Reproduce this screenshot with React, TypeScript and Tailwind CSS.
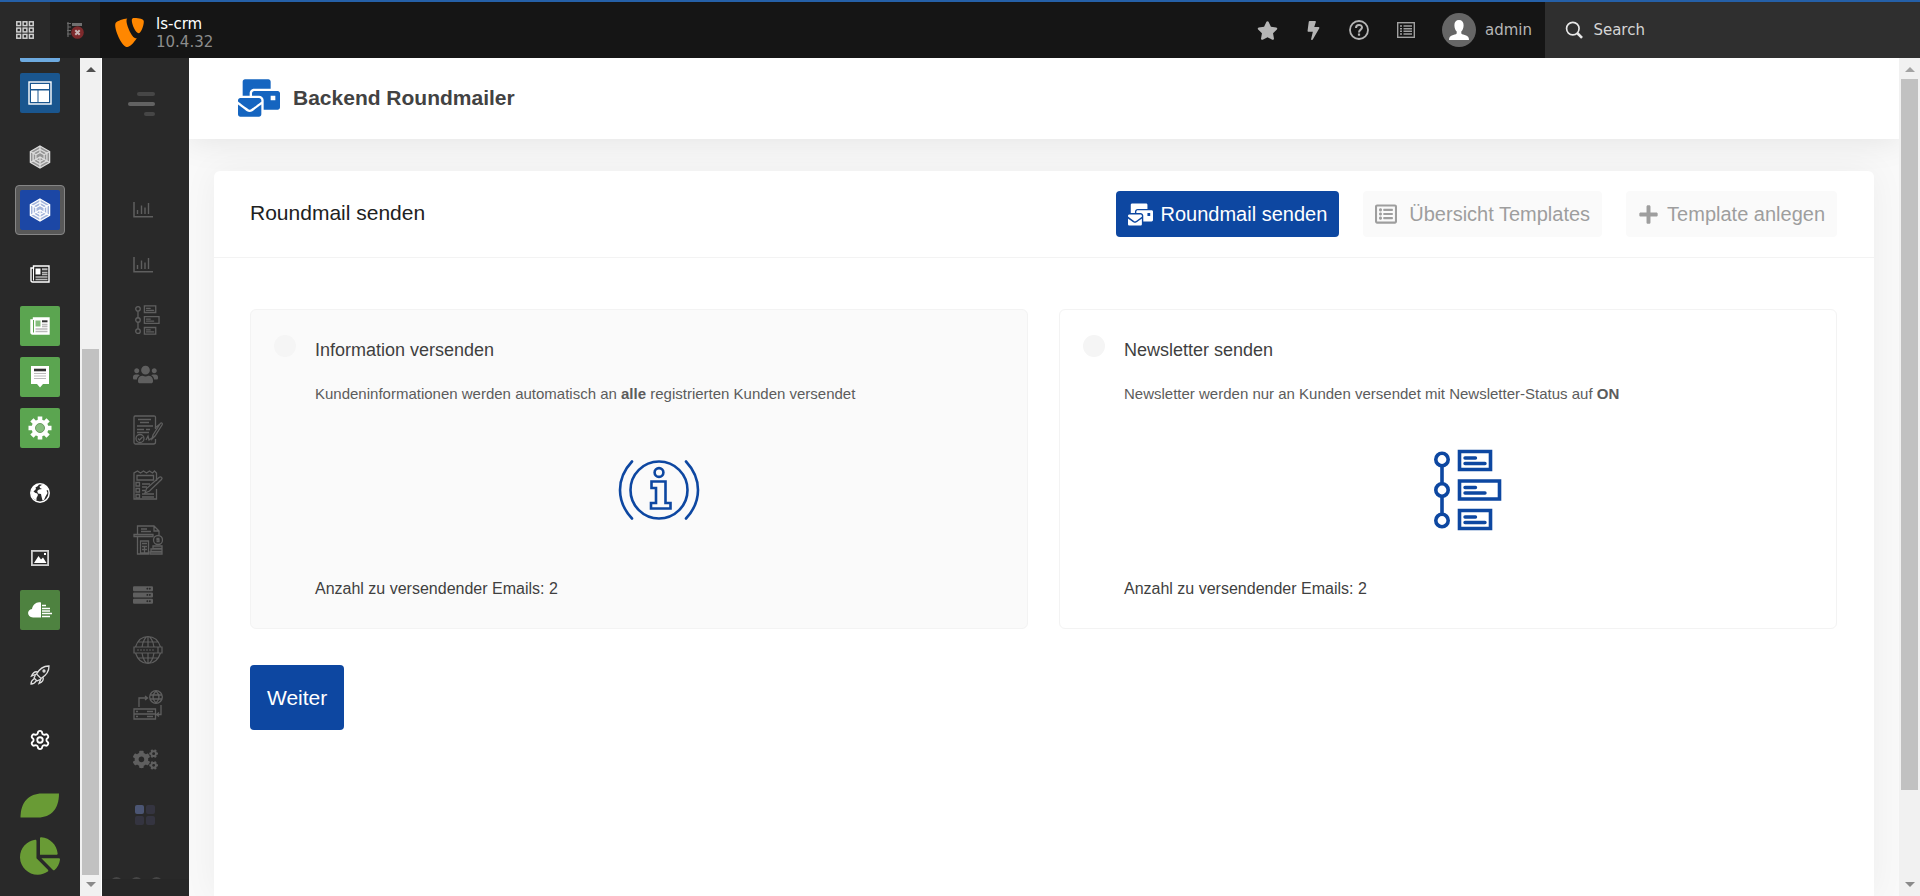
import type { ReactNode } from "react";
import { Settings } from "lucide-react";
import {
  FaBolt,
  FaChartPie,
  FaCogs,
  FaMailBulk,
  FaPlus,
  FaRegListAlt,
  FaServer,
  FaStar,
  FaUsers,
} from "react-icons/fa";
import { SiTypo3 } from "react-icons/si";

type IconProps = { className?: string };

const GridIcon = () => (
  <svg viewBox="0 0 18 18" className="h-[18px] w-[18px]" fill="none" stroke="#d0d0d0" strokeWidth="1.500">
    {[0, 6.3, 12.6].map((y) =>
      [0, 6.3, 12.6].map((x) => <rect key={`${x}-${y}`} x={x + 0.8} y={y + 0.8} width="3.800" height="3.800" />),
    )}
  </svg>
);

const TreeOffIcon = () => (
  <svg viewBox="0 0 18 18" className="h-[18px] w-[18px]" fill="none">
    <path d="M2 1v15M1 2.500h4M2 6h3M1 9.500h4M1 13h4" stroke="#6a6a6a" strokeWidth="1.200" />
    <path d="M6 3.500h10" stroke="#707070" strokeWidth="3" />
    <circle cx="11.500" cy="11.500" r="6.300" fill="#7d2a2c" />
    <path d="M9.300 9.300l4.400 4.400M13.700 9.300l-4.400 4.400" stroke="#c8b4b4" strokeWidth="2" />
  </svg>
);

const HelpIcon = () => (
  <svg viewBox="0 0 20 20" className="h-5 w-5" fill="none" stroke="#b5b5b5">
    <circle cx="10" cy="10" r="9" strokeWidth="1.800" />
    <path d="M7 8c0-4 6-4 6-.5 0 2.300-3 2-3 5" strokeWidth="2" />
    <path d="M10 13.500v2.200" strokeWidth="2.200" />
  </svg>
);

const ListBoxIcon = () => (
  <svg viewBox="0 0 18 16" className="h-4 w-[18px]" fill="none" stroke="#a0a0a0">
    <rect x=".7" y=".7" width="16.600" height="14.600" strokeWidth="1.400" />
    <path d="M3 4h2M3 6.700h2M3 9.300h2M3 12h2M6.500 4H15M6.500 6.700H15M6.500 9.300H15M6.500 12H15" strokeWidth="1.500" />
  </svg>
);

const AvatarIcon = () => (
  <svg viewBox="0 0 34 34" className="h-[34px] w-[34px]">
    <circle cx="17" cy="17" r="17" fill="#666" />
    <path
      d="M17 7c3 0 4.600 2 4.600 5.200 0 2.800-1 5.300-2.300 6.300v1.500c0 1 1 1.400 3.500 2.100 3 .8 4.200 2 4.200 4.900H7c0-2.900 1.200-4.100 4.200-4.900 2.500-.7 3.500-1.100 3.500-2.100v-1.500c-1.300-1-2.300-3.500-2.300-6.300C12.400 9 14 7 17 7z"
      fill="#fff"
    />
  </svg>
);

const SearchGlass = () => (
  <svg viewBox="0 0 20 20" className="h-5 w-5" fill="none" stroke="#e8e8e8">
    <circle cx="8.500" cy="8.500" r="6.800" strokeWidth="1.800" />
    <path d="M13.500 13.500l5 5" strokeWidth="2.800" />
  </svg>
);

const LayoutIcon = () => (
  <svg viewBox="0 0 24 24" className="h-6 w-6" fill="none">
    <rect x="1" y="1" width="22" height="22" stroke="#fff" strokeWidth="1.400" />
    <path d="M3 3h18v5H3zM3 9.500h6.500V21H3zM10.500 9.500H21V21H10.500z" fill="#fff" />
  </svg>
);

const CubeIcon = ({ className }: IconProps) => (
  <svg viewBox="0 0 24 26" className={className} stroke="currentColor" strokeWidth="1.400" fill="none">
    <path d="M12 1l10.500 6v12L12 25 1.500 19V7z" fill="currentColor" fillOpacity=".6" />
    <path d="M12 4.500l7.500 4.200v8.500L12 21.500l-7.500-4.300V8.700zM12 8l4.500 2.600v4.800L12 18l-4.500-2.600v-4.800z" />
    <path d="M1.500 19L12 13l10.500 6M12 1v7M1.500 7l6 3.600M22.500 7l-6 3.600M12 13v12" />
  </svg>
);

const NewsIcon = ({ filled }: { filled?: boolean }) => (
  <svg viewBox="0 0 20 18" className="h-[18px] w-5" fill="none">
    <path d="M3.500 1H19v16H2.500C1.500 17 1 16.300 1 15.500V3h2.500z" fill={filled ? "#fff" : "none"} stroke="#fff" strokeWidth="1.400" />
    <path d="M3.500 3v12.500" stroke={filled ? "#5ba550" : "#fff"} />
    <path d="M5.500 3.500h5v6h-5z" fill={filled ? "#86bd7e" : "#fff"} />
    <path d="M12 4.300h5.500" stroke={filled ? "#333" : "#bbb"} strokeWidth="2" />
    <path d="M12 7.500h5.500M12 9.500h5.500M5.500 12h12M5.500 14.500h12" stroke="#bbb" strokeWidth="1.300" />
  </svg>
);

const NoteIcon = () => (
  <svg viewBox="0 0 18 22" className="h-[22px] w-[18px]">
    <path d="M0 0h18v18h-6l-3 3.500L6 18H0z" fill="#fff" />
    <path d="M3 4h12" stroke="#333" strokeWidth="2.600" />
    <path d="M3 7.500h12M3 10h12M3 12.500h12" stroke="#bbb" />
  </svg>
);

const GearIcon = () => (
  <svg viewBox="0 0 24 24" className="h-6 w-6" stroke="#fff" fill="none">
    <path d="M12 .5v23M.5 12h23M3.900 3.900l16.200 16.200M20.100 3.900L3.900 20.100" strokeWidth="4.600" />
    <circle cx="12" cy="12" r="8" fill="#fff" />
    <circle cx="12" cy="12" r="4.500" fill="#86bd7e" stroke="#6a9c62" />
  </svg>
);

const WorldIcon = () => (
  <svg viewBox="0 0 20 20" className="h-5 w-5">
    <circle cx="10" cy="10" r="9.200" fill="none" stroke="#fff" strokeWidth="1.500" />
    <path
      d="M2.500 5C4 2.500 6 1.200 9 1l-1 2-2.500 1.500L6 6 3.500 8.500 5.500 10c2 0 2.500 1 2.300 2.500L6.500 15v2.500C3 16 1 13 1 9.500zM9.500 3.500l3-2c3 .8 5 2.500 6 5.500l-2 .5 1 2.500-2 3.500-1.500 3.500-1.500.5-1-4-.5-2.500-3-.5-.8-2.500L9 6.500l3-.5-2-1z"
      fill="#fff"
    />
  </svg>
);

const PictureIcon = () => (
  <svg viewBox="0 0 18 16" className="h-4 w-[18px]" fill="none">
    <rect x=".9" y=".9" width="16.200" height="14.200" stroke="#cfcfcf" strokeWidth="1.800" />
    <path d="M3 13l4.500-7 2.500 3.500L12 7.500l3.500 5.500zM13 3h2v2h-2z" fill="#fff" />
  </svg>
);

const CloudIcon = () => (
  <svg viewBox="0 0 24 16" className="h-4 w-6">
    <path d="M13 .5v15H5c-6.300 0-6.500-8-1-8.500C4.500 2.500 9-1 13 .5z" fill="#fff" />
    <path d="M14 3.500h4M14 6.500h8M14 9h8M14 11.500h10M14 14.500h8" stroke="#fff" strokeWidth="1.500" />
  </svg>
);

const RocketIcon = () => (
  <svg viewBox="0 0 20 20" className="h-5 w-5" fill="none" stroke="#e0e0e0" strokeWidth="1.300">
    <path d="M19 1c-6-.2-9.500 3-12.500 8l4.500 4.500C16 10.500 19.200 7 19 1zM8 7c-3-1-5 .5-6.500 4l5-2M13 12c1 3-.5 5-4 6.500l2-5M5.500 10L4 13l3 3 3-1.500M4 14c-2 1-3 2-3 5 3 0 4-1 5-3" />
    <circle cx="14" cy="6" r="1" />
  </svg>
);

const LeafIcon = () => (
  <svg viewBox="0 0 40 25" className="h-[25px] w-10">
    <path d="M.5 24.500C.5 9 9 .5 22 .5h17C39 16 31 24.500 18 24.500z" fill="#699b35" />
  </svg>
);

const BarsIcon = () => (
  <svg viewBox="0 0 20 16" className="h-4 w-5" fill="none" stroke="currentColor">
    <path d="M1 0v14.800h19" strokeWidth="1.500" />
    <path d="M4.500 12V8M8.500 12V3.500M12 12V5.500M15.500 12V1" strokeWidth="1.400" />
  </svg>
);

const TimelineIcon = ({ className }: IconProps) => (
  <svg viewBox="0 0 68 82" className={className} fill="none" stroke="currentColor" strokeWidth="3.600">
    <circle cx="8" cy="10.500" r="6.200" />
    <circle cx="8" cy="41" r="6.200" />
    <circle cx="8" cy="71.500" r="6.200" />
    <path d="M8 17v18M8 47v18" />
    <path d="M25.500 2.500h31v18h-31zM25.500 32h40v18h-40zM25.500 61.500h31v18h-31z" />
    <path
      d="M31 9h10.500M31 14.500h20M31 38.500h10.500M31 44h20M31 68h10.500M31 73.500h20"
      strokeWidth="3.400"
      strokeLinecap="round"
    />
  </svg>
);

const InfoIcon = () => (
  <svg viewBox="0 0 82 60" className="h-[60px] w-[82px]" fill="none" stroke="#0d47a1" strokeWidth="2.600">
    <circle cx="41" cy="30" r="28.500" />
    <circle cx="41" cy="12.500" r="4.400" />
    <path d="M33.500 21.500h14v21.500h5v5.500h-19.500V43h5V28h-4.500z" />
    <path d="M14 1.500C-2 18.500-2 41.500 14 58.500M68 1.500C84 18.500 84 41.500 68 58.500" strokeLinecap="round" />
  </svg>
);

const ContractIcon = () => (
  <svg viewBox="0 0 30 30" className="h-[30px] w-[30px]" fill="none" stroke="currentColor" strokeWidth="1.300">
    <path d="M22.500 14V2.500C22.500 1 22 1 21 1H2C1 1 1 1.500 1 2.500v25C1 29 1.500 29 2.500 29h18c1.500 0 2-.5 2-2v-3" />
    <path d="M5 4.500h13M7 7.500h9M4 11h16M4 14.500h7M13 14.500h4M4 17.500h12M13 25l2-4 1 4 3-2" />
    <circle cx="7" cy="23.500" r="4" />
    <path d="M5 23.500l1.500 1.500 3-3M19 24l1-4 7-11c1-2 3-1 2 1l-7 11zM27 9l-5 4" />
  </svg>
);

const ChecklistIcon = () => (
  <svg viewBox="0 0 30 30" className="h-[30px] w-[30px]" fill="none" stroke="currentColor" strokeWidth="1.300">
    <path d="M23.500 11V3l-2-2-2 2-3-2-3 2-3-2-3 2-3-2L1 3v26h22.500V19M4 5.500h16.500V10H4z" />
    <path d="M3 12.500h3.500V16H3zM3 18.500h3.500V22H3zM3 24.500h3.500V28H3zM9 14h8M9 17h5M9 20.500h3M9 24h12M9 27h12" />
    <path d="M12 23l1.500-4.500L26 7.500c2-1.500 4 .5 2.500 2L16.500 21z" />
  </svg>
);

const InvoiceIcon = () => (
  <svg viewBox="0 0 30 30" className="h-[30px] w-[30px]" fill="none" stroke="currentColor" strokeWidth="1.300">
    <path d="M4.500 9V1H21l5 5v4M21 1v5h5M8 4h6M8 6.500h10M1 9.500h19v2H1zM4.500 12v17H16M7.500 16h8v12h-8zM9 18.500h5M9 21.500h5M9 24.500h5M11.500 21v7" />
    <circle cx="25" cy="15" r="4.500" />
    <path d="M26.500 13.500h-2.500v1.500h2v1.700h-2.500M20 21h9v2.500H20zM18 24h11v2.500H18zM17 27h12v2H17z" />
  </svg>
);

const WebIcon = () => (
  <svg viewBox="0 0 30 30" className="h-[30px] w-[30px]" fill="none" stroke="currentColor" strokeWidth="1.200">
    <path d="M2.500 12C7-2 23-2 27.500 12M2.500 18C7 32 23 32 27.500 18M9 12C10 5 13 1.500 15 1.500S20 5 21 12M9 18c1 7 4 10.500 6 10.500S20 25 21 18M15 1.500V12M15 18v10.500M5 7h20M5 23h20M1 12h28v6H1zM25 12v6" />
    <path d="M4 15h18" strokeDasharray="2 1" />
  </svg>
);

const ServerLinkIcon = () => (
  <svg viewBox="0 0 30 30" className="h-[30px] w-[30px]" fill="none" stroke="currentColor" strokeWidth="1.300">
    <circle cx="23" cy="7" r="6.300" />
    <path d="M17 5h12M17 9h12M23 1c-4 4-4 8 0 12M23 1c4 4 4 8 0 12" />
    <path d="M6 17V8h8M12 6l2.500 2-2.500 2M28 15v9.500h-4M26 22.500l-2.500 2 2.500 2M1 19h21.500v10H1zM1 24h21.500M3 21.500h2M3 26.500h2M14 21.500h6M14 26.500h6" />
  </svg>
);

const AppsIcon = () => (
  <svg viewBox="0 0 20 20" className="ml-0.5 h-5 w-5" fill="#343440">
    <rect width="9" height="9" rx="2" fill="#4b5573" />
    <rect x="11" width="9" height="9" rx="2" />
    <rect y="11" width="9" height="9" rx="2" />
    <rect x="11" y="11" width="9" height="9" rx="2" />
  </svg>
);

const ModuleLink = ({ label, className = "", children }: { label: string; className?: string; children: ReactNode }) => (
  <a href="#" aria-label={label} className={`flex h-10 w-10 shrink-0 items-center justify-center rounded-xs ${className}`}>
    {children}
  </a>
);

const ModuleMenu = () => (
  <nav aria-label="Modules" className="flex w-20 shrink-0 flex-col items-center bg-[#292929]">
    <div className="h-1 w-10 shrink-0 rounded-b-xs bg-[#6daae0]" />
    <ModuleLink label="Page" className="mt-[11px] bg-[#1a568f]"><LayoutIcon /></ModuleLink>
    <ModuleLink label="Ecodev" className="mt-6 text-[#dcdcdc]"><CubeIcon className="h-6 w-[22px]" /></ModuleLink>
    <div className="mt-2 shrink-0 rounded-sm border border-[#858585] bg-[#585858] p-1">
      <ModuleLink label="Roundmailer" className="bg-[#1c47a5] text-white"><CubeIcon className="h-6 w-[22px]" /></ModuleLink>
    </div>
    <ModuleLink label="News" className="mt-[19px]"><NewsIcon /></ModuleLink>
    <ModuleLink label="News administration" className="mt-3 bg-[#5ba550]"><NewsIcon filled /></ModuleLink>
    <ModuleLink label="Comments" className="mt-[11px] bg-[#5ba550]"><NoteIcon /></ModuleLink>
    <ModuleLink label="Options" className="mt-[11px] bg-[#5ba550]"><GearIcon /></ModuleLink>
    <ModuleLink label="Sites" className="mt-[25px]"><WorldIcon /></ModuleLink>
    <ModuleLink label="File" className="mt-[25px]"><PictureIcon /></ModuleLink>
    <ModuleLink label="Cloud" className="mt-3 bg-[#4e8240]"><CloudIcon /></ModuleLink>
    <ModuleLink label="Upgrade" className="mt-[25px]"><RocketIcon /></ModuleLink>
    <ModuleLink label="Settings" className="mt-[25px] text-white"><Settings size={22} strokeWidth={2} /></ModuleLink>
    <ModuleLink label="Environment" className="mt-[25px]"><LeafIcon /></ModuleLink>
    <ModuleLink label="Reports" className="mt-[11px] text-[#699b35]"><FaChartPie size={40} /></ModuleLink>
  </nav>
);

const crmItems = [
  { label: "Dashboard", icon: <BarsIcon /> },
  { label: "Statistics", icon: <BarsIcon /> },
  { label: "Timeline", icon: <TimelineIcon className="ml-0.5 h-[30px] w-[25px]" /> },
  { label: "Customers", icon: <FaUsers size={25} /> },
  { label: "Contracts", icon: <ContractIcon /> },
  { label: "Tasks", icon: <ChecklistIcon /> },
  { label: "Invoices", icon: <InvoiceIcon /> },
  { label: "Server", icon: <FaServer size={20} /> },
  { label: "Domains", icon: <WebIcon /> },
  { label: "Hosting", icon: <ServerLinkIcon /> },
  { label: "Settings", icon: <FaCogs size={25} /> },
  { label: "Apps", icon: <AppsIcon /> },
];

const CrmMenu = () => (
  <nav aria-label="CRM" className="flex w-[87px] shrink-0 flex-col bg-[#292929] text-[#5f5f5f]">
    <button type="button" aria-label="Toggle menu" className="mt-[34px] mr-[34px] flex flex-col items-end gap-[6px] self-end">
      <span className="h-1 w-[18px] rounded-full bg-[#464646]" />
      <span className="h-1 w-[27px] rounded-full bg-[#626262]" />
      <span className="h-1 w-[11px] rounded-full bg-[#464646]" />
    </button>
    <div className="mt-[66px] flex flex-col pl-[31px]">
      {crmItems.map((item) => (
        <a key={item.label} href="#" aria-label={item.label} className="flex h-[55px] items-center">
          {item.icon}
        </a>
      ))}
    </div>
    {/* footer dots, cut off by the bottom bar */}
    <div className="mt-auto flex h-0.5 shrink-0 gap-[9px] overflow-hidden pl-[9px]">
      <span className="h-[11px] w-[11px] shrink-0 rounded-full bg-[#464646]" />
      <span className="h-[11px] w-[11px] shrink-0 rounded-full bg-[#464646]" />
      <span className="h-[11px] w-[11px] shrink-0 rounded-full bg-[#464646]" />
    </div>
    <div className="h-[17px] shrink-0 bg-[#272727]" />
  </nav>
);

const Scrollbar = ({ className, track, upClass }: { className: string; track: string; upClass: string }) => (
  <div className={`flex shrink-0 flex-col items-center bg-[#f1f1f1] ${className}`}>
    <svg viewBox="0 0 10 5" className={`mt-[9px] mb-[7px] h-[5px] w-[10px] shrink-0 ${upClass}`} fill="currentColor">
      <path d="M5 0l5 5H0z" />
    </svg>
    <div className={`flex min-h-0 w-full flex-1 flex-col items-center ${track}`}>
      <div className="min-h-0 w-[17px] flex-1 bg-[#c1c1c1]" />
    </div>
    <svg viewBox="0 0 10 5" className="mt-[7px] mb-[9px] h-[5px] w-[10px] shrink-0 text-[#8a8a8a]" fill="currentColor">
      <path d="M0 0h10L5 5z" />
    </svg>
  </div>
);

const TopBar = () => (
  <header className="flex h-[58px] shrink-0 items-stretch border-t-2 border-[#2560a8] bg-[#151515] font-['DejaVu_Sans',sans-serif] text-[15px]">
    <button type="button" aria-label="Toggle modules" className="flex w-[50px] items-center justify-center bg-[#292929]">
      <GridIcon />
    </button>
    <button type="button" aria-label="Toggle page tree" className="flex w-[50px] items-center justify-center bg-[#1f1f1f]">
      <TreeOffIcon />
    </button>
    <a href="#" className="ml-[15px] flex items-center gap-3">
      <SiTypo3 size={29} className="mt-1 text-[#ff8700]" />
      <span className="flex flex-col pt-1.5 leading-[18px]">
        <span className="text-white">ls-crm</span>
        <span className="text-[#8c8c8c]">10.4.32</span>
      </span>
    </a>
    <div className="ml-auto flex items-center text-[#b5b5b5]">
      <button type="button" aria-label="Bookmarks" className="flex w-[46px] justify-center"><FaStar size={21} /></button>
      <button type="button" aria-label="Clear cache" className="flex w-[46px] justify-center"><FaBolt size={19} /></button>
      <button type="button" aria-label="Help" className="flex w-[46px] justify-center"><HelpIcon /></button>
      <button type="button" aria-label="Application information" className="flex w-12 justify-center"><ListBoxIcon /></button>
      <button type="button" className="mr-[13px] ml-3 flex items-center gap-[9px]">
        <AvatarIcon />
        admin
      </button>
    </div>
    <label className="flex w-[375px] items-center gap-[10px] bg-[#2f2f2f] pl-5">
      <SearchGlass />
      <input type="search" aria-label="Search" placeholder="Search" className="w-full bg-transparent outline-none placeholder:text-[#d5d5d5]" />
    </label>
  </header>
);

type OptionProps = {
  id: string;
  title: string;
  text: ReactNode;
  icon: ReactNode;
  className?: string;
};

const MailOption = ({ id, title, text, icon, className = "" }: OptionProps) => (
  <label htmlFor={id} className={`flex h-80 rounded-md border border-[#f3f3f3] pr-6 pl-[23px] ${className}`}>
    <input type="radio" id={id} name="mail-type" className="mt-[25px] h-[22px] w-[22px] shrink-0 appearance-none rounded-full bg-[#f5f5f5]" />
    <span className="ml-[19px] flex flex-1 flex-col pt-[26px]">
      <span className="text-lg leading-7 text-[#3f3f3f]">{title}</span>
      <span className="mt-5 text-[15px] leading-5 text-[#5c5c5c]">{text}</span>
      <span className="mt-11 flex h-[84px] items-center justify-center text-[#0d47a1]">{icon}</span>
      <span className="mt-[45px] text-base leading-6 text-[#3f3f3f]">Anzahl zu versendender Emails: 2</span>
    </span>
  </label>
);

const App = () => {
  return (
    <div className="flex h-screen flex-col overflow-hidden font-['Liberation_Sans',Arial,sans-serif]">
      <TopBar />
      <div className="flex min-h-0 flex-1">
        <ModuleMenu />
        <Scrollbar className="mr-px w-[21px]" track="pt-[270px]" upClass="text-[#505050]" />
        <CrmMenu />
        <div className="flex min-w-0 flex-1 flex-col overflow-hidden bg-[#f9f9f9]">
          <div className="z-10 flex h-[81px] shrink-0 items-center gap-[13px] bg-white pb-0.5 pl-[49px] shadow-[0_0_35px_rgba(0,0,0,0.1)]">
            <FaMailBulk size={42} className="text-[#1565c0]" />
            <h1 className="text-[21px] leading-7 font-bold text-[#424242]">Backend Roundmailer</h1>
          </div>
          <main className="mx-[25px] mt-8 flex-1 rounded-t-md bg-white shadow-[0_0_35px_rgba(0,0,0,0.05)]">
            <div className="flex h-[87px] items-center justify-between border-b border-[#f3f3f3] pr-[37px] pl-9">
              <h2 className="pb-0.5 text-[21px] leading-7 text-[#212121]">Roundmail senden</h2>
              <div className="flex gap-6 text-xl text-[#9e9e9e]">
                <button type="button" className="flex h-[46px] items-center gap-2 rounded-sm bg-[#0d47a1] px-3 text-white">
                  <FaMailBulk size={25} />
                  Roundmail senden
                </button>
                <button type="button" className="flex h-[46px] items-center gap-3 rounded-sm bg-[#fafafa] px-3">
                  <FaRegListAlt size={22} />
                  Übersicht Templates
                </button>
                <button type="button" className="flex h-[46px] items-center gap-2 rounded-sm bg-[#fafafa] px-3">
                  <FaPlus size={21} />
                  Template anlegen
                </button>
              </div>
            </div>
            <form className="pt-[51px] pr-[37px] pl-9">
              <div className="grid grid-cols-2 gap-[31px]">
                <MailOption
                  id="information"
                  title="Information versenden"
                  text={<>Kundeninformationen werden automatisch an <strong>alle</strong> registrierten Kunden versendet</>}
                  icon={<InfoIcon />}
                  className="bg-[#fafafa]"
                />
                <MailOption
                  id="newsletter"
                  title="Newsletter senden"
                  text={<>Newsletter werden nur an Kunden versendet mit Newsletter-Status auf <strong>ON</strong></>}
                  icon={<TimelineIcon className="h-[82px] w-[68px]" />}
                />
              </div>
              <button type="button" className="mt-9 h-[65px] rounded-sm bg-[#0d47a1] px-[17px] text-[21px] leading-7 text-white">
                Weiter
              </button>
            </form>
          </main>
        </div>
        <Scrollbar className="w-[21px]" track="pb-[85px]" upClass="text-[#a3a3a3]" />
      </div>
    </div>
  );
};

export default App;
